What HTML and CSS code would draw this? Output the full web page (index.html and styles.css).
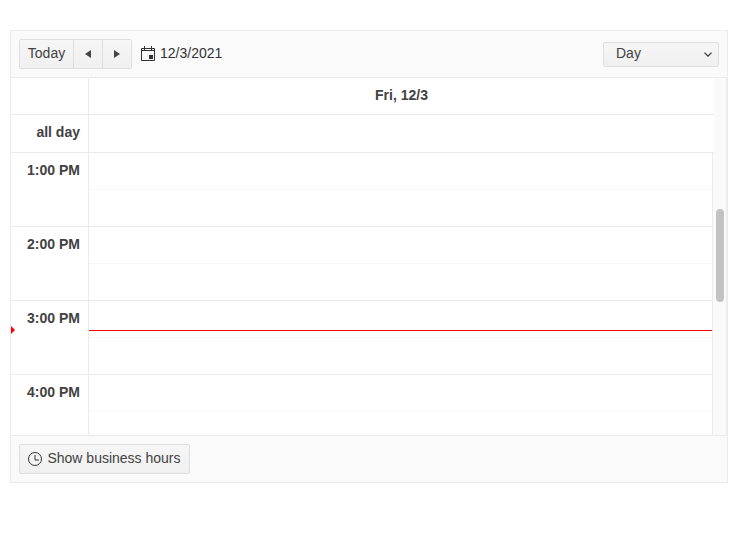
FILE: index.html
```html
<!DOCTYPE html>
<html lang="en">
<head>
<meta charset="utf-8">
<title>Scheduler</title>
<link rel="stylesheet" href="styles.css">
</head>
<body>
<div class="scheduler">
  <div class="toolbar">
    <div class="btn-group">
      <button class="btn today"><span>Today</span></button>
      <button class="btn nav"><svg width="6" height="8" viewBox="0 0 6 8"><path d="M6 0v8L0 4z" fill="#444"/></svg></button>
      <button class="btn nav"><svg width="6" height="8" viewBox="0 0 6 8"><path d="M0 0v8l6-4z" fill="#444"/></svg></button>
    </div>
    <div class="date">
      <svg class="cal" width="14" height="15" viewBox="0 0 14 15" fill="none" stroke="#333" stroke-width="1"><path d="M.5 2.500h13v12h-13zM.5 4.500h13M3.500 0v4M10.500 0v4"/><rect x="8" y="9" width="4" height="4" fill="#333" stroke="none"/></svg>
      <span>12/3/2021</span>
    </div>
    <div class="view-select"><span>Day</span><svg width="8" height="5" viewBox="0 0 8 5" fill="none" stroke="#333" stroke-width="1.200"><path d="M.5 .7l3.500 3.500 3.500-3.500"/></svg></div>
  </div>
  <div class="head-row day-row">
    <div class="gutter"></div>
    <div class="cell day-label">Fri, 12/3</div>
    <div class="spacer"></div>
  </div>
  <div class="head-row allday-row">
    <div class="gutter label">all day</div>
    <div class="cell"></div>
    <div class="spacer"></div>
  </div>
  <div class="body">
    <div class="times">
      <div class="slot"><div class="gutter label">1:00 PM</div><div class="cell"><div class="half"></div></div></div>
      <div class="slot"><div class="gutter label">2:00 PM</div><div class="cell"><div class="half"></div></div></div>
      <div class="slot"><div class="gutter label">3:00 PM</div><div class="cell"><div class="half"></div></div></div>
      <div class="slot last"><div class="gutter label">4:00 PM</div><div class="cell"><div class="half"></div></div></div>
      <div class="now-line"></div>
      <div class="now-arrow"></div>
    </div>
    <div class="scrollbar"><div class="thumb"></div></div>
  </div>
  <div class="footer">
    <button class="btn hours"><svg width="14" height="14" viewBox="0 0 14 14" fill="none" stroke="#333" stroke-width="1"><circle cx="7" cy="7" r="6.500"/><path d="M7 3v5h4"/></svg><span>Show business hours</span></button>
  </div>
</div>
</body>
</html>
```
FILE: styles.css
```css
* { box-sizing: border-box; }
html, body { margin: 0; padding: 0; background: #fff; }
body { padding: 30px 10px 0; font-family: "Liberation Sans", Arial, sans-serif; font-size: 14px; color: #424242; }
.scheduler { width: 718px; height: 453px; border: 1px solid #ebebeb; display: flex; flex-direction: column; background: #fff; }
.toolbar { height: 47px; flex: none; display: flex; align-items: center; padding: 0 8px; background: #fafafa; border-bottom: 1px solid #ebebeb; }
.btn-group { display: flex; height: 30px; border: 1px solid #dedede; border-radius: 2px; }
.btn { font: inherit; color: #424242; background: linear-gradient(#f6f6f6, #f0f0f0); border: 0; padding: 0; display: flex; align-items: center; justify-content: center; }
.btn span, .view-select span, .date span { position: relative; top: -1px; }
.today { width: 53px; }
.nav { width: 29px; border-left: 1px solid #dedede; }
.date { display: flex; align-items: center; gap: 5px; margin-left: 9px; color: #333; }
.cal { position: relative; top: -1px; }
.view-select { margin-left: auto; width: 116px; height: 25px; border: 1px solid #dedede; border-radius: 2px; background: linear-gradient(#f6f6f6, #f0f0f0); display: flex; align-items: center; justify-content: space-between; padding: 0 6px 0 12px; }
.head-row { flex: none; display: flex; }
.head-row .gutter, .head-row .cell { border-bottom: 1px solid #ebebeb; }
.day-row { height: 37px; }
.allday-row { height: 38px; }
.gutter { width: 78px; flex: none; border-right: 1px solid #ebebeb; }
.label { font-weight: bold; text-align: right; padding: 9px 8px 0 0; line-height: 16px; }
.cell { flex: 1; min-width: 0; }
.day-label { font-weight: bold; text-align: center; line-height: 34px; }
.spacer { width: 13px; flex: none; background: #fafafa; border-right: 1px solid #ededed; }
.body { flex: 1; min-height: 0; display: flex; }
.times { flex: 1; min-width: 0; position: relative; overflow: hidden; border-right: 1px solid #ebebeb; }
.slot { height: 74px; display: flex; border-bottom: 1px solid #ebebeb; }
.slot .cell { display: flex; flex-direction: column; }
.half { height: 37px; border-bottom: 1px dotted #f0f0f0; }
.now-line { position: absolute; left: 78px; right: 0; top: 177px; height: 1px; background: #f00; }
.now-arrow { position: absolute; left: 0; top: 173px; border-left: 4px solid #f00; border-top: 4px solid transparent; border-bottom: 4px solid transparent; }
.scrollbar { width: 14px; flex: none; background: #fafafa; border-right: 1px solid #ededed; padding: 56px 3px 0 3px; }
.thumb { width: 8px; height: 93px; border-radius: 4px; background: #c2c2c2; }
.footer { height: 47px; flex: none; display: flex; align-items: center; padding: 0 8px; background: #fafafa; border-top: 1px solid #ebebeb; }
.hours { height: 30px; width: 171px; gap: 5px; border: 1px solid #dedede; border-radius: 2px; }
```
